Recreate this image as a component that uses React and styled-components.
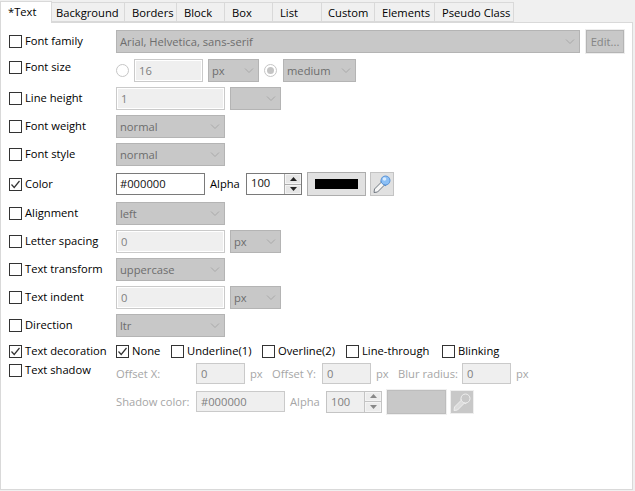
import styled, { createGlobalStyle } from "styled-components";

const Global = createGlobalStyle`
  html, body { margin: 0; padding: 0; background: #f0f0f0; }
  * { box-sizing: border-box; }
`;

const Window = styled.div`
  width: 635px;
  height: 491px;
  background: #f0f0f0;
  font-family: "Open Sans", "Noto Sans", sans-serif;
  font-size: 11.2px;
  color: #000;
  overflow: hidden;
  padding-top: 2px;
`;

const TabBar = styled.div`
  display: flex;
  height: 21px;
  position: relative;
  z-index: 1;
`;

const Tab = styled.div`
  width: ${props => props.width}px;
  height: ${props => props.active ? "22px" : "20px"};
  margin-top: ${props => props.active ? "-1px" : "0"};
  padding-left: ${props => props.pad}px;
  line-height: 19px;
  background: ${props => props.active ? "#fff" : "#f0f0f0"};
  border: 1px solid #d9d9d9;
  border-left-width: ${props => props.active ? "1px" : "0"};
  border-bottom-width: ${props => props.active ? "0" : "1px"};
  white-space: nowrap;
`;

const Panel = styled.div`
  width: 633px;
  height: 468px;
  background: #fff;
  border: 1px solid #d9d9d9;
  margin-top: -1px;
  padding: 7px 0 0 8px;
`;

const Row = styled.div`
  display: flex;
  align-items: center;
  height: ${props => props.height || 23}px;
  margin-bottom: ${props => props.after ?? 5}px;
`;

const LabelCell = styled.div`
  width: 107px;
  flex: none;
  align-self: ${props => props.top ? "flex-start" : "center"};
  margin-bottom: ${props => props.lift || 0}px;
`;

const CheckWrap = styled.label`
  display: flex;
  align-items: center;
  gap: 3px;
  height: 15px;
  width: ${props => props.width ? `${props.width}px` : "auto"};
  white-space: nowrap;
  flex: none;
`;

const CheckText = styled.span`
  padding-bottom: 2px;
`;

const CheckBox = styled.span`
  width: 13px;
  height: 13px;
  flex: none;
  background: #fff;
  border: 1px solid #333;
  display: flex;
  align-items: center;
  justify-content: center;
`;

const Controls = styled.div`
  display: flex;
  align-items: center;
`;

const SelectBox = styled.div`
  width: ${props => props.width}px;
  height: 23px;
  margin-right: ${props => props.after || 0}px;
  background: #c8c8c8;
  border: 1px solid #b4b4b4;
  color: #6d6d6d;
  display: flex;
  align-items: center;
  justify-content: space-between;
  padding: 0 4px 0 3px;
  flex: none;
`;

const TextField = styled.div`
  width: ${props => props.width}px;
  height: ${props => props.height || 23}px;
  margin-right: ${props => props.after || 0}px;
  background: #efefef;
  border: 1px solid #cacaca;
  box-shadow: ${props => props.thin ? "none" : "inset 0 0 0 1px #fff"};
  color: #808080;
  display: flex;
  align-items: center;
  padding-left: 4px;
  padding-bottom: ${props => props.thin ? "0" : "1px"};
  flex: none;
`;

const ActiveField = styled.div`
  width: ${props => props.width}px;
  height: 22px;
  margin-right: ${props => props.after || 0}px;
  background: #fff;
  border: 1px solid #7a7a7a;
  color: #111;
  display: flex;
  align-items: center;
  padding: 0 0 1px 3px;
  flex: none;
`;

const RadioDot = styled.span`
  width: 13px;
  height: 13px;
  margin-right: ${props => props.after || 0}px;
  border-radius: 50%;
  border: 1px solid #c6c6c6;
  background: #fff;
  flex: none;
  display: flex;
  align-items: center;
  justify-content: center;

  &::after {
    content: "";
    display: ${props => props.checked ? "block" : "none"};
    width: 7px;
    height: 7px;
    border-radius: 50%;
    background: #c4c4c4;
  }
`;

const EditButton = styled.div`
  width: 38px;
  height: 23px;
  margin-left: 6px;
  background: #c8c8c8;
  border: 1px solid #b4b4b4;
  outline: 1px solid #ededed;
  color: #858585;
  display: flex;
  align-items: center;
  justify-content: center;
`;

const FieldLabel = styled.span`
  color: ${props => props.off ? "#a6a6a6" : "#000"};
  width: ${props => props.width ? `${props.width}px` : "auto"};
  padding-bottom: ${props => props.off ? "0" : "2px"};
  flex: none;
  white-space: nowrap;
`;

const Spin = styled.div`
  width: 56px;
  height: 22px;
  margin-right: 5px;
  display: flex;
  flex: none;
  background: ${props => props.off ? "#efefef" : "#fff"};
  border: 1px solid ${props => props.off ? "#c4c4c4" : "#7a7a7a"};
  color: ${props => props.off ? "#808080" : "#111"};
`;

const SpinText = styled.span`
  flex: 1;
  padding-left: 4px;
  line-height: ${props => props.off ? "20px" : "18px"};
`;

const SpinButtons = styled.div`
  width: 17px;
  display: flex;
  flex-direction: column;
  gap: 1px;
  background: ${props => props.off ? "#c4c4c4" : "#adadad"};
  border-left: 1px solid ${props => props.off ? "#c4c4c4" : "#adadad"};
`;

const SpinButton = styled.div`
  flex: 1;
  background: ${props => props.off ? "#ececec" : "#e6e6e6"};
  border: 1px solid #f4f4f4;
  display: flex;
  align-items: center;
  justify-content: center;
`;

const Swatch = styled.div`
  width: 59px;
  height: 24px;
  margin-right: 4px;
  flex: none;
  padding: 6px 7px;
  background: ${props => props.off ? "#c8c8c8" : "#e1e1e1"};
  border: 1px solid ${props => props.off ? "#bdbdbd" : "#adadad"};
  outline: ${props => props.off ? "1px solid #efefef" : "none"};
`;

const SwatchFill = styled.div`
  height: 100%;
  background: ${props => props.off ? "transparent" : "#000"};
`;

const PickerButton = styled.div`
  width: 24px;
  height: 24px;
  flex: none;
  background: ${props => props.off ? "#c8c8c8" : "#e1e1e1"};
  border: 1px solid ${props => props.off ? "#efefef" : "#c4c4c4"};
  display: flex;
  align-items: center;
  justify-content: center;
`;

const ShadowBlock = styled.div`
  display: flex;
  flex-direction: column;
`;

const tabs = [
  { label: "*Text", width: 52, pad: 7, active: true },
  { label: "Background", width: 73, pad: 4 },
  { label: "Borders", width: 52, pad: 7 },
  { label: "Block", width: 48, pad: 7 },
  { label: "Box", width: 48, pad: 7 },
  { label: "List", width: 49, pad: 7 },
  { label: "Custom", width: 53, pad: 6 },
  { label: "Elements", width: 60, pad: 7 },
  { label: "Pseudo Class", width: 79, pad: 7 },
];

const Chevron = () => (
  <svg width="10" height="6" viewBox="0 0 10 6">
    <path d="M1 0.5 L5 4.5 L9 0.5" fill="none" stroke="#a8a8a8" strokeWidth="1" />
  </svg>
);

const Tick = () => (
  <svg width="11" height="11" viewBox="0 0 11 11">
    <path d="M1.5 5.5 L4.2 8.5 L9.5 2" fill="none" stroke="#333" strokeWidth="1.2" />
  </svg>
);

const Arrow = ({ up, color }) => (
  <svg width="7" height="4" viewBox="0 0 7 4">
    <path d={up ? "M3.5 0 L7 4 L0 4 Z" : "M0 0 L7 0 L3.5 4 Z"} fill={color} />
  </svg>
);

const Pipette = ({ off }) => (
  <svg width="20" height="20" viewBox="0 0 20 20">
    <path d="M2 18.5 L2.5 15 L9.5 8 L12.5 11 L5.5 18 Z" fill={off ? "#dcdcdc" : "#f6f6f6"} stroke={off ? "#efefef" : "#6f7780"} strokeWidth="1" />
    <path d="M9 6.5 L14 11.5" stroke={off ? "#efefef" : "#3f7fc8"} strokeWidth="2" />
    <circle cx="13.5" cy="6.5" r="4.5" fill={off ? "#c8c8c8" : "#8cc0f6"} stroke={off ? "#efefef" : "#5a93d6"} strokeWidth="1" />
    {!off && <circle cx="12.5" cy="5" r="1.8" fill="#d8ebff" />}
  </svg>
);

const Check = ({ label, checked, width }) => (
  <CheckWrap width={width}>
    <CheckBox>{checked && <Tick />}</CheckBox>
    <CheckText>{label}</CheckText>
  </CheckWrap>
);

const Select = ({ value, width, after }) => (
  <SelectBox width={width} after={after}>
    <span>{value}</span>
    <Chevron />
  </SelectBox>
);

const AlphaSpin = ({ off }) => (
  <Spin off={off}>
    <SpinText off={off}>100</SpinText>
    <SpinButtons off={off}>
      <SpinButton off={off}><Arrow up color={off ? "#888" : "#222"} /></SpinButton>
      <SpinButton off={off}><Arrow color={off ? "#888" : "#222"} /></SpinButton>
    </SpinButtons>
  </Spin>
);

const LabeledRow = ({ label, checked, lift, children, after, height }) => (
  <Row after={after} height={height}>
    <LabelCell lift={lift}>
      <Check label={label} checked={checked} />
    </LabelCell>
    <Controls>{children}</Controls>
  </Row>
);

export default function App() {
  return (
    <Window>
      <Global />
      <TabBar>
        {tabs.map(tab => (
          <Tab key={tab.label} width={tab.width} pad={tab.pad} active={tab.active}>{tab.label}</Tab>
        ))}
      </TabBar>
      <Panel>
        <LabeledRow label="Font family" after={6}>
          <Select value="Arial, Helvetica, sans-serif" width={464} />
          <EditButton>Edit...</EditButton>
        </LabeledRow>
        <LabeledRow label="Font size" lift={7}>
          <RadioDot after={5} />
          <TextField width={69} after={5}>16</TextField>
          <Select value="px" width={51} after={5} />
          <RadioDot checked after={6} />
          <Select value="medium" width={73} />
        </LabeledRow>
        <LabeledRow label="Line height">
          <TextField width={109} after={5}>1</TextField>
          <Select value="" width={51} />
        </LabeledRow>
        <LabeledRow label="Font weight">
          <Select value="normal" width={109} />
        </LabeledRow>
        <LabeledRow label="Font style" after={6}>
          <Select value="normal" width={109} />
        </LabeledRow>
        <LabeledRow label="Color" checked height={24} after={6}>
          <ActiveField width={89} after={5}>#000000</ActiveField>
          <FieldLabel width={36}>Alpha</FieldLabel>
          <AlphaSpin />
          <Swatch><SwatchFill /></Swatch>
          <PickerButton><Pipette /></PickerButton>
        </LabeledRow>
        <LabeledRow label="Alignment">
          <Select value="left" width={109} />
        </LabeledRow>
        <LabeledRow label="Letter spacing">
          <TextField width={109} after={5}>0</TextField>
          <Select value="px" width={51} />
        </LabeledRow>
        <LabeledRow label="Text transform">
          <Select value="uppercase" width={109} />
        </LabeledRow>
        <LabeledRow label="Text indent">
          <TextField width={109} after={5}>0</TextField>
          <Select value="px" width={51} />
        </LabeledRow>
        <LabeledRow label="Direction" after={4}>
          <Select value="ltr" width={109} />
        </LabeledRow>
        <LabeledRow label="Text decoration" checked height={20} after={2}>
          <Check label="None" checked width={55} />
          <Check label="Underline(1)" width={91} />
          <Check label="Overline(2)" width={84} />
          <Check label="Line-through" width={96} />
          <Check label="Blinking" />
        </LabeledRow>
        <Row height={49} after={0}>
          <LabelCell top>
            <Check label="Text shadow" />
          </LabelCell>
          <ShadowBlock>
            <Row height={21} after={7}>
              <FieldLabel off width={80}>Offset X:</FieldLabel>
              <TextField thin width={49} height={21} after={5}>0</TextField>
              <FieldLabel off width={22}>px</FieldLabel>
              <FieldLabel off width={50}>Offset Y:</FieldLabel>
              <TextField thin width={49} height={21} after={5}>0</TextField>
              <FieldLabel off width={22}>px</FieldLabel>
              <FieldLabel off width={64}>Blur radius:</FieldLabel>
              <TextField thin width={49} height={21} after={5}>0</TextField>
              <FieldLabel off>px</FieldLabel>
            </Row>
            <Row height={21} after={0}>
              <FieldLabel off width={80}>Shadow color:</FieldLabel>
              <TextField thin width={89} height={21} after={5}>#000000</TextField>
              <FieldLabel off width={36}>Alpha</FieldLabel>
              <AlphaSpin off />
              <Swatch off><SwatchFill off /></Swatch>
              <PickerButton off><Pipette off /></PickerButton>
            </Row>
          </ShadowBlock>
        </Row>
      </Panel>
    </Window>
  );
}
